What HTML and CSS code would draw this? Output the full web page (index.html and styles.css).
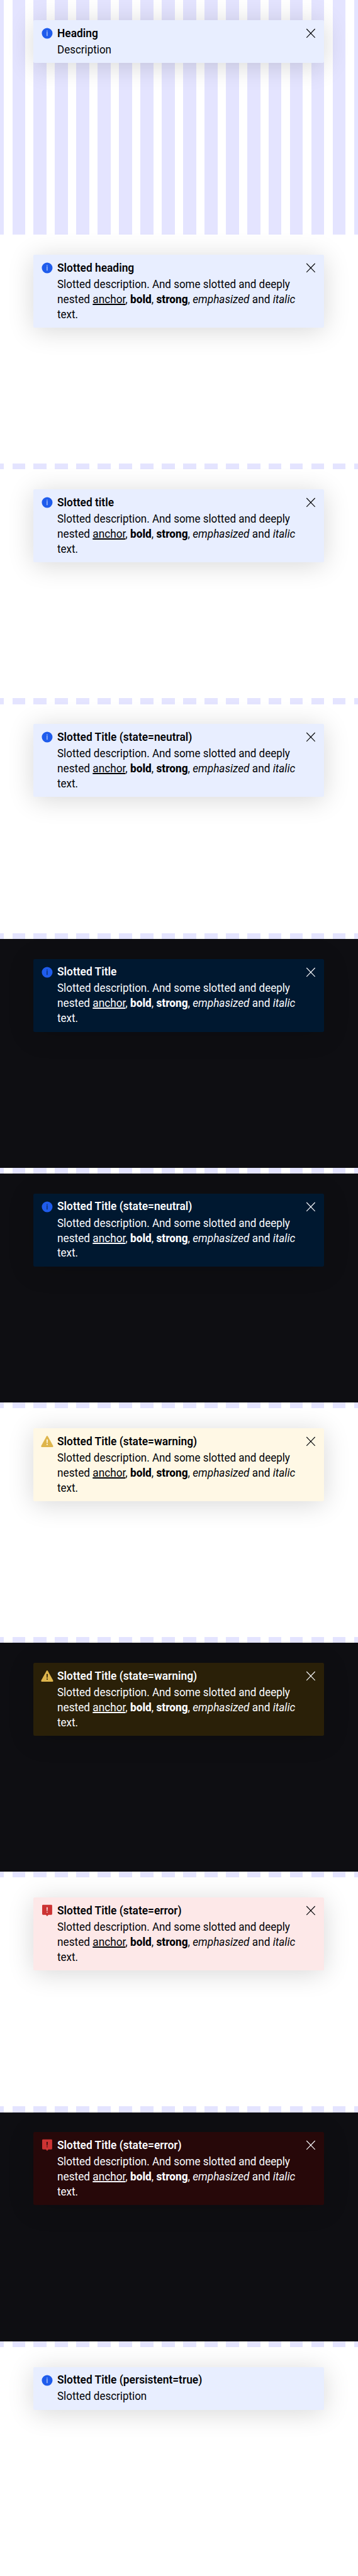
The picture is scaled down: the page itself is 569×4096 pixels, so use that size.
FILE: index.html
```
<!DOCTYPE html>
<html lang="en">
<head>
<meta charset="utf-8">
<title>Banner</title>
<link rel="stylesheet" href="styles.css">
</head>
<body>
<svg class="sprite" aria-hidden="true">
  <symbol id="info" viewBox="0 0 42 42"><circle cx="21" cy="21" r="15"/><path class="cut" d="M20 13.2h1.8v2H20zM20 16.6h1.8v12H20z"/></symbol>
  <symbol id="warning" viewBox="0 0 42 42"><path d="M19.4 6.2q1.6-1.8 3.2 0L37.7 33.4Q38.6 36.8 36 36.8H6Q3.4 36.8 4.3 33.4z"/><path class="cut" d="M19.2 15.3h3.6l-.6 10.8h-2.4zM19.4 28h3.2v3.2h-3.2z"/></symbol>
  <symbol id="error" viewBox="0 0 42 42"><path d="M9.500 5h23q2.500 0 2.500 2.500v23q0 2.500-2.500 2.500h-8L21 36.800 17.500 33h-8q-2.500 0-2.500-2.500v-23q0-2.500 2.500-2.500z"/><path class="cut" d="M19.200 12h3.400l-.7 10.500h-2zM19.600 24.400h2.600v2.600h-2.600z"/></symbol>
  <symbol id="close" viewBox="0 0 42 42"><path d="M9.2 8.8 32.8 33.2M32.8 8.8 9.2 33.2"/></symbol>
</svg>
<main class="stage" id="stage"></main>
<template id="slotted"><p class="text line-one">Slotted description. And some slotted and deeply</p><p class="text line-two">nested <a class="anchor">anchor</a>, <b>bold</b>, <strong>strong</strong>, <em>emphasized</em> and <i>italic</i></p><p class="text">text.</p></template>
<script src="banners.js"></script>
</body>
</html>
```
FILE: banners.js
```
const banners = [
  { title: "Heading", text: "Description", section: "bare", state: "info" },
  { title: "Slotted heading", state: "info" },
  { title: "Slotted title", state: "info" },
  { title: "Slotted Title (state=neutral)", state: "info" },
  { title: "Slotted Title", section: "dark", state: "info" },
  { title: "Slotted Title (state=neutral)", section: "dark", state: "info" },
  { title: "Slotted Title (state=warning)", state: "warning" },
  { title: "Slotted Title (state=warning)", section: "dark", state: "warning" },
  { title: "Slotted Title (state=error)", state: "error" },
  { title: "Slotted Title (state=error)", section: "dark", state: "error" },
  { title: "Slotted Title (persistent=true)", text: "Slotted description", state: "info", persistent: true }
];
const slotted = document.getElementById("slotted").innerHTML;
document.getElementById("stage").innerHTML = banners.map(b => `
<section class="section ${b.section || "light"}">
  <div class="banner ${b.state}">
    <svg class="icon"><use href="#${b.state}"/></svg>
    <div class="content"><h5 class="title">${b.title}</h5>${b.text ? `<p class="text">${b.text}</p>` : slotted}</div>
    ${b.persistent ? "" : `<svg class="close"><use href="#close"/></svg>`}
  </div>
</section>`).join("");
```
FILE: styles.css
```
html { font-size: 5.688889px; background: #fff; }
body { margin: 0; overflow: hidden; }
.sprite { position: absolute; width: 0; height: 0; }
.stage {
  display: flex;
  flex-direction: column;
  gap: 1.6rem;
  height: 720rem;
  background: repeating-linear-gradient(90deg, #e4e4ff 0 3.5714rem, #fff 3.5714rem 5.9714rem) -2.5429rem 0 / 107.4857rem 100%;
}
.section {
  --ink: #010205;
  box-sizing: border-box;
  flex: none;
  height: 64rem;
  padding: 5.6rem 9.4rem 0;
}
.light { background: #fff; }
.dark { --ink: #fbfcff; background: #0e0e12; }
.banner {
  display: flex;
  gap: 0.8rem;
  box-sizing: border-box;
  width: 81.2rem;
  padding: 1.6rem;
  border-radius: 0.4rem;
  background: var(--bg);
  color: var(--ink);
  box-shadow: 0 0.8rem 7.2rem rgba(0, 0, 0, 0.16);
}
.info { --bg: #e8eeff; --state: #1f5cec; }
.warning { --bg: #fff8e5; --state: #deb54c; }
.error { --bg: #fde8e8; --state: #cc3333; }
.dark .info { --bg: #001830; }
.dark .warning { --bg: #2a2008; }
.dark .error { --bg: #270809; }
.icon, .close { flex: none; width: 4.2rem; height: 4.2rem; }
.icon { fill: var(--state); }
.cut { fill: var(--bg); }
.close { fill: none; stroke: var(--ink); stroke-width: 2; }
.content { flex: 1; min-width: 0; padding-top: 0.12rem; margin-bottom: -0.12rem; }
.title, .text {
  margin: 0;
  font: 400 3.3rem/4.2rem Roboto, "Liberation Sans", sans-serif;
  white-space: nowrap;
  transform: scaleX(0.905);
  transform-origin: 0 0;
}
.title { margin-bottom: 0.4rem; font-weight: 600; transform: scaleX(0.925); }
.text.line-two { transform: scaleX(0.918); }
.text b, .text strong { font-weight: 800; }
.anchor { text-decoration: underline; text-decoration-thickness: 0.3rem; text-underline-offset: 0.25rem; text-decoration-skip-ink: none; }
```
